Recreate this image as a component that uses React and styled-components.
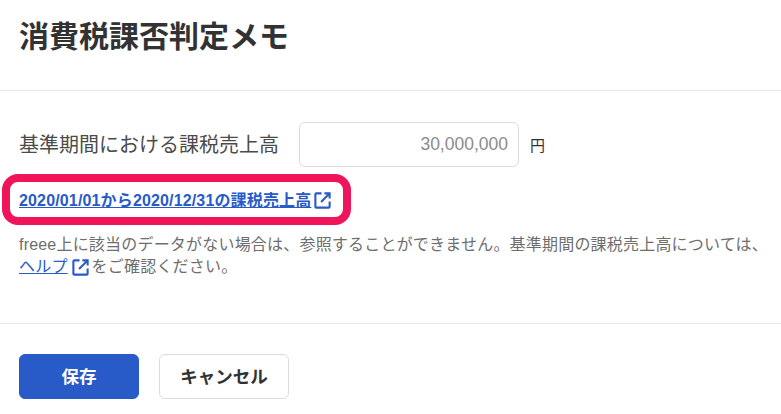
import React from 'react';
import styled, { createGlobalStyle } from 'styled-components';

const GlobalStyle = createGlobalStyle`
  html, body {
    margin: 0;
    padding: 0;
    background: #fff;
  }
  body {
    font-family: "Liberation Sans", "Noto Sans CJK JP", sans-serif;
    color: #323232;
  }
`;

const Page = styled.div`
  width: 781px;
  height: 414px;
  overflow: hidden;
  display: flex;
  flex-direction: column;
`;

const Header = styled.header`
  height: 91px;
  box-sizing: border-box;
  padding: 17px 19px 0;
  border-bottom: 1px solid #e6e6e6;
`;

const Title = styled.h1`
  margin: 0;
  font-size: 30px;
  line-height: 40px;
  font-weight: 700;
  color: #323232;
`;

const Body = styled.section`
  height: 233px;
  box-sizing: border-box;
  padding: 31px 0 0 0;
  border-bottom: 1px solid #e6e6e6;
`;

const FieldRow = styled.div`
  display: flex;
  align-items: center;
  padding-left: 19px;
`;

const FieldLabel = styled.label`
  width: 280px;
  font-size: 20px;
  line-height: 44px;
  color: #4b4b4b;
`;

const AmountBox = styled.div`
  width: 220px;
  height: 45px;
  box-sizing: border-box;
  border: 1px solid #dcdcdc;
  border-radius: 6px;
  padding-right: 10px;
  font-size: 17.5px;
  line-height: 43px;
  text-align: right;
  color: #8c8c8c;
`;

const Unit = styled.span`
  margin-left: 11px;
  font-size: 15px;
  color: #323232;
`;

const Highlight = styled.div`
  width: 349px;
  height: 51px;
  box-sizing: border-box;
  margin: 7px 0 0 2px;
  padding-left: 9px;
  border: 8px solid #f0145a;
  border-radius: 16px;
  display: flex;
  align-items: center;
`;

const ReportLink = styled.a`
  margin-bottom: 2px;
  font-size: 16px;
  font-weight: 700;
  letter-spacing: 0.15px;
  color: #285ac8;
  text-decoration: underline;
  white-space: nowrap;
`;

const Note = styled.p`
  margin: 9px 0 0;
  padding: 0 19px;
  font-size: 16px;
  line-height: 22px;
  letter-spacing: 0.2px;
  color: #6e6e6e;
  white-space: nowrap;
`;

const HelpLink = styled.a`
  color: #285ac8;
  text-decoration: underline;
`;

const OpenIcon = styled.svg`
  display: inline-block;
  vertical-align: ${props => props.$align};
  margin: ${props => props.$margin};
  color: #285ac8;
`;

const Footer = styled.footer`
  display: flex;
  gap: 20px;
  padding: 30px 19px 0;
`;

const Button = styled.button`
  width: ${props => props.$width};
  height: 45px;
  box-sizing: border-box;
  border-radius: 6px;
  border: 1px solid ${props => props.$primary ? '#285ac8' : '#dcdcdc'};
  background: ${props => props.$primary ? '#285ac8' : '#fff'};
  color: ${props => props.$primary ? '#fff' : '#323232'};
  font-family: inherit;
  font-size: 17.5px;
  font-weight: 700;
  padding: 0 0 3px;
`;

const ExternalIcon = ({ size, align, margin }) => (
  <OpenIcon $align={align} $margin={margin} width={size} height={size} viewBox="0 0 20 20" fill="none" stroke="currentColor" strokeWidth="2.2">
    <path d="M9 2.5H3.5a1 1 0 0 0-1 1v13a1 1 0 0 0 1 1h13a1 1 0 0 0 1-1V11" />
    <path d="M12 2.5h5.5V8M17.5 2.5 8.5 11.5" />
  </OpenIcon>
);

const App = () => (
  <Page>
    <GlobalStyle />
    <Header>
      <Title>消費税課否判定メモ</Title>
    </Header>
    <Body>
      <FieldRow>
        <FieldLabel>基準期間における課税売上高</FieldLabel>
        <AmountBox>30,000,000</AmountBox>
        <Unit>円</Unit>
      </FieldRow>
      <Highlight>
        <ReportLink href="#">2020/01/01から2020/12/31の課税売上高</ReportLink>
        <ExternalIcon size={19} align="middle" margin="1px 0 0 2px" />
      </Highlight>
      <Note>
        freee上に該当のデータがない場合は、参照することができません。基準期間の課税売上高については、
        <br />
        <HelpLink href="#">ヘルプ</HelpLink>
        <ExternalIcon size={19} align="-5px" margin="0 2px 0 3px" />
        をご確認ください。
      </Note>
    </Body>
    <Footer>
      <Button $primary $width="120px">保存</Button>
      <Button $width="130px">キャンセル</Button>
    </Footer>
  </Page>
);

export default App;
